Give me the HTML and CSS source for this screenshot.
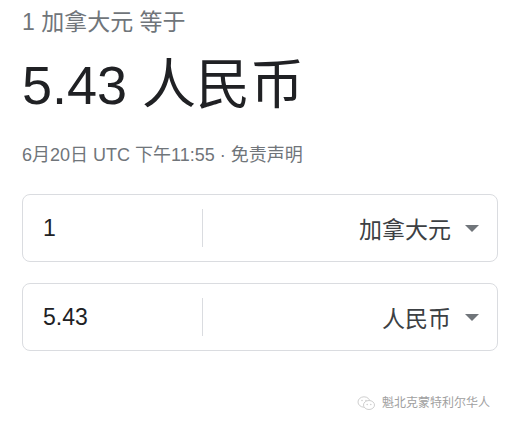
FILE: index.html
```html
<!DOCTYPE html>
<html lang="zh">
<head>
<meta charset="utf-8">
<link rel="stylesheet" href="styles.css">
</head>
<body>
<div class="card">
  <div class="src">1 加拿大元 等于</div>
  <div class="result">5.43 人民币</div>
  <div class="meta">6月20日 UTC 下午11:55 · 免责声明</div>
  <div class="box">
    <div class="amount">1</div>
    <div class="divider"></div>
    <div class="currency"><span>加拿大元</span><span class="caret"></span></div>
  </div>
  <div class="box">
    <div class="amount">5.43</div>
    <div class="divider"></div>
    <div class="currency"><span>人民币</span><span class="caret"></span></div>
  </div>
  <div class="mark">
    <svg class="wx" width="19" height="16" viewBox="0 0 19 16">
      <ellipse cx="7" cy="7" rx="6" ry="5.2" fill="none" stroke="#cfcfcf" stroke-width="1"/>
      <circle cx="5" cy="5.5" r="0.8" fill="#cfcfcf"/>
      <circle cx="9" cy="5.5" r="0.8" fill="#cfcfcf"/>
      <ellipse cx="12" cy="10" rx="5.5" ry="4.5" fill="#fff" stroke="#cfcfcf" stroke-width="1"/>
      <circle cx="10.2" cy="9.5" r="0.8" fill="#cfcfcf"/>
      <circle cx="13.8" cy="9.5" r="0.8" fill="#cfcfcf"/>
    </svg>
    <span>魁北克蒙特利尔华人</span>
  </div>
</div>
</body>
</html>
```
FILE: styles.css
```css
html, body {
  margin: 0;
  padding: 0;
  background: #fff;
}
body {
  font-family: Arial, "Liberation Sans", "Noto Sans CJK SC", sans-serif;
  width: 510px;
  height: 425px;
  overflow: hidden;
}
.card {
  padding: 7px 12px 0 22px;
  display: flex;
  flex-direction: column;
}
.src {
  font-size: 23px;
  line-height: 30px;
  color: #70757a;
}
.result {
  margin-top: 16px;
  font-size: 54px;
  line-height: 64px;
  color: #202124;
}
.meta {
  margin-top: 27px;
  font-size: 18px;
  line-height: 22px;
  color: #70757a;
}
.box {
  margin-top: 28px;
  height: 66px;
  border: 1px solid #dadce0;
  border-radius: 8px;
  display: flex;
  align-items: center;
}
.box + .box {
  margin-top: 21px;
}
.amount {
  width: 159px;
  padding-left: 20px;
  font-size: 23px;
  color: #202124;
}
.divider {
  width: 1px;
  height: 38px;
  background: #dadce0;
}
.currency {
  flex: 1;
  display: flex;
  justify-content: flex-end;
  align-items: center;
  font-size: 23px;
  color: #3c4043;
  padding-right: 18px;
}
.caret {
  margin-left: 14px;
  width: 0;
  height: 0;
  border-left: 7px solid transparent;
  border-right: 7px solid transparent;
  border-top: 7px solid #70757a;
}
.mark {
  margin-top: 43px;
  align-self: flex-end;
  display: flex;
  align-items: center;
  gap: 6px;
  font-size: 12px;
  line-height: 18px;
  color: #a0a0a0;
  padding-right: 8px;
}
```
